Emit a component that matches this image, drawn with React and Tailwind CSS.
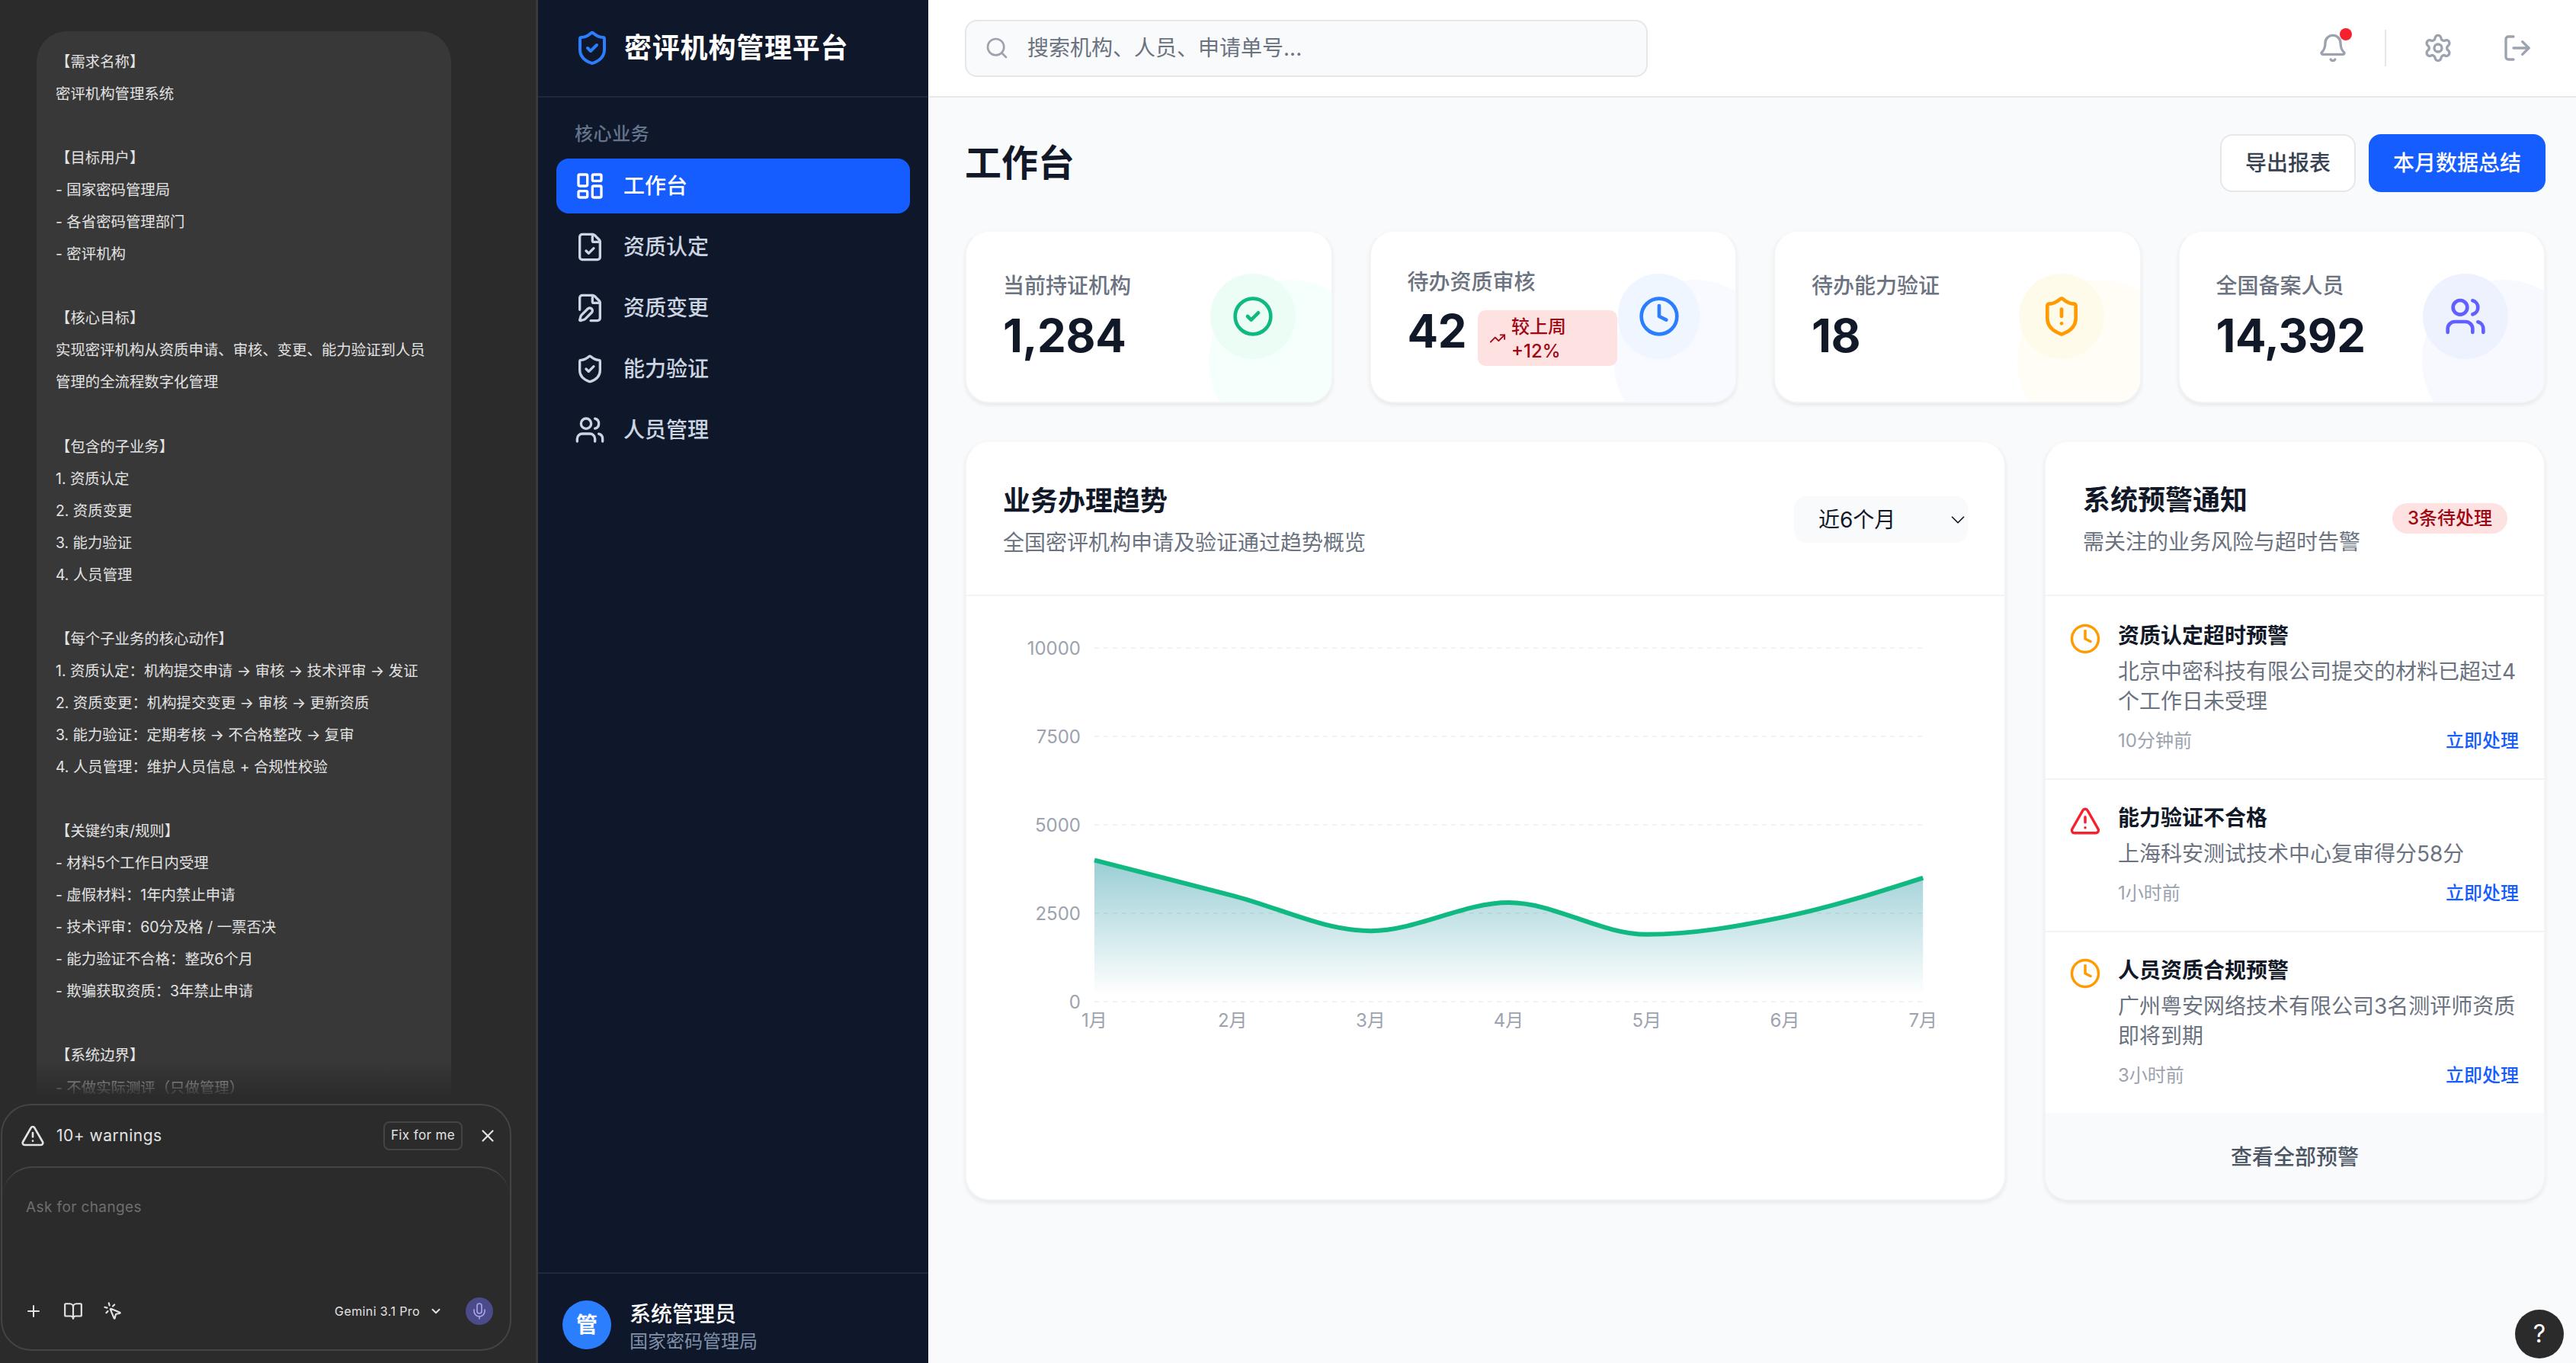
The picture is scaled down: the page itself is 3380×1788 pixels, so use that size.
import React from 'react';
import {
  LayoutDashboard, FileCheck, FilePen, ShieldCheck, Users, Search, Bell, Settings, LogOut,
  CircleCheck, Clock, ShieldAlert, TrendingUp, ChevronDown, TriangleAlert, X, Plus, BookOpen,
  MousePointerClick, Mic,
} from 'lucide-react';

const requirement = `【需求名称】
密评机构管理系统

【目标用户】
- 国家密码管理局
- 各省密码管理部门
- 密评机构

【核心目标】
实现密评机构从资质申请、审核、变更、能力验证到人员
管理的全流程数字化管理

【包含的子业务】
1. 资质认定
2. 资质变更
3. 能力验证
4. 人员管理

【每个子业务的核心动作】
1. 资质认定：机构提交申请 → 审核 → 技术评审 → 发证
2. 资质变更：机构提交变更 → 审核 → 更新资质
3. 能力验证：定期考核 → 不合格整改 → 复审
4. 人员管理：维护人员信息 + 合规性校验

【关键约束/规则】
- 材料5个工作日内受理
- 虚假材料：1年内禁止申请
- 技术评审：60分及格 / 一票否决
- 能力验证不合格：整改6个月
- 欺骗获取资质：3年禁止申请

【系统边界】
- 不做实际测评（只做管理）`;

const navItems = [
  { label: '工作台', icon: LayoutDashboard, active: true },
  { label: '资质认定', icon: FileCheck },
  { label: '资质变更', icon: FilePen },
  { label: '能力验证', icon: ShieldCheck },
  { label: '人员管理', icon: Users },
];

const alerts = [
  { title: '资质认定超时预警', desc: '北京中密科技有限公司提交的材料已超过4个工作日未受理', time: '10分钟前', icon: Clock, color: 'text-[#ff9a00]' },
  { title: '能力验证不合格', desc: '上海科安测试技术中心复审得分58分', time: '1小时前', icon: TriangleAlert, color: 'text-[#f5222d]' },
  { title: '人员资质合规预警', desc: '广州粤安网络技术有限公司3名测评师资质即将到期', time: '3小时前', icon: Clock, color: 'text-[#ff9a00]' },
];

// chart geometry, in page pixels
const chartData = [4000, 3000, 2000, 2800, 1900, 2400, 3500];
const months = ['1月', '2月', '3月', '4月', '5月', '6月', '7月'];
const ticks = [10000, 7500, 5000, 2500, 0];
const plotLeft = 168;
const stepX = 181.2;
const plotTop = 20;
const plotH = 464;
const toY = (v) => plotTop + plotH - (v / 10000) * plotH;

// same curve as d3 curveMonotoneX
function monotonePath(pts) {
  const n = pts.length;
  const s = [];
  for (let i = 0; i < n - 1; i++) s.push((pts[i + 1][1] - pts[i][1]) / (pts[i + 1][0] - pts[i][0]));
  const t = pts.map((_, i) => {
    if (i === 0 || i === n - 1) return null;
    const a = s[i - 1];
    const b = s[i];
    return (Math.sign(a) + Math.sign(b)) * Math.min(Math.abs(a), Math.abs(b), 0.25 * Math.abs(a + b));
  });
  t[0] = (3 * s[0] - t[1]) / 2;
  t[n - 1] = (3 * s[n - 2] - t[n - 2]) / 2;
  let d = `M${pts[0][0]},${pts[0][1]}`;
  for (let i = 0; i < n - 1; i++) {
    const h = (pts[i + 1][0] - pts[i][0]) / 3;
    d += `C${pts[i][0] + h},${pts[i][1] + h * t[i]} ${pts[i + 1][0] - h},${pts[i + 1][1] - h * t[i + 1]} ${pts[i + 1][0]},${pts[i + 1][1]}`;
  }
  return d;
}

const points = chartData.map((v, i) => [plotLeft + i * stepX, toY(v)]);
const linePath = monotonePath(points);
const areaPath = `${linePath}L${points[6][0]},${toY(0)}L${points[0][0]},${toY(0)}Z`;

function TrendChart() {
  return (
    <svg width="1361" height="560" className="block">
      <defs>
        <linearGradient id="trendFill" x1="0" y1="0" x2="0" y2="1">
          <stop offset="5%" stopColor="#0e8a9a" stopOpacity="0.4" />
          <stop offset="95%" stopColor="#0e8a9a" stopOpacity="0" />
        </linearGradient>
      </defs>
      {ticks.map((t) => (
        <g key={t}>
          <line x1={plotLeft} x2={plotLeft + 6 * stepX} y1={toY(t)} y2={toY(t)} stroke="#f1f2f4" strokeWidth="2" strokeDasharray="6 6" />
          <text x={plotLeft - 18} y={toY(t) + 9} textAnchor="end" fontSize="24" fill="#9ca3af">{t}</text>
        </g>
      ))}
      <path d={areaPath} fill="url(#trendFill)" />
      <path d={linePath} fill="none" stroke="#10b981" strokeWidth="6" />
      {months.map((m, i) => (
        <text key={m} x={plotLeft + i * stepX} y={toY(0) + 33} textAnchor="middle" fontSize="24" fill="#9ca3af">{m}</text>
      ))}
    </svg>
  );
}

function StatCard({ label, value, icon: Icon, tint, blob, iconColor, badge }) {
  return (
    <div className="relative h-[227px] overflow-hidden rounded-[32px] border-2 border-[#f3f4f6] border-t-[#f8f8f9] bg-white shadow-[0_3px_5px_rgba(0,0,0,0.07)]">
      <div className={`absolute left-[318px] top-[63px] h-[212px] w-[212px] rounded-full ${blob}`} />
      <div className="relative flex items-start justify-between pl-[48px] pr-[47px]">
        <div className={badge ? 'pt-[46px]' : 'pt-[51px]'}>
          <p className="text-[28px] leading-[40px] font-medium text-[#6b7280]">{label}</p>
          <div className={`flex items-start ${badge ? 'mt-[14px]' : 'mt-[15px]'}`}>
            <p className="text-[60px] leading-[60px] font-bold tracking-[-0.4px] text-[#111827]">{value}</p>
            {badge && (
              <div className="ml-[15px] mt-[3px] flex h-[73px] w-[183px] items-center gap-[7px] rounded-[10px] bg-[#fee2e2] pl-[15px]">
                <TrendingUp size={22} strokeWidth={2} className="text-[#9f0712]" />
                <span className="pt-[3px] text-[24px] leading-[32px] font-medium whitespace-pre text-[#9f0712]">{'较上周\n+12%'}</span>
              </div>
            )}
          </div>
        </div>
        <div className={`mt-[55px] flex h-[112px] shrink-0 items-center justify-center rounded-full ${badge ? 'w-[107px]' : 'w-[112px]'} ${tint}`}>
          <Icon size={56} strokeWidth={2} className={iconColor} />
        </div>
      </div>
    </div>
  );
}

function BuilderPanel() {
  return (
    <div className="flex h-full w-[706px] shrink-0 flex-col border-r-[3px] border-[#3a3a3a] bg-[#2b2b2b] text-[#e3e3e3]">
      <div className="h-[1435px] shrink-0 overflow-hidden pt-[41px] pl-[48px]">
        <div className="relative h-full w-[544px] overflow-hidden rounded-t-[40px] bg-[#383838]">
          <p className="pt-[19px] pl-[25px] text-[19.4px] leading-[42.05px] whitespace-pre-wrap">{requirement}</p>
          <div className="absolute inset-x-0 bottom-0 h-[44px] bg-gradient-to-b from-transparent to-[#2b2b2b]/90" />
        </div>
      </div>
      <div className="mt-[13px] ml-px flex h-[324px] w-[670px] flex-col overflow-hidden rounded-[40px] border-2 border-[#444444]">
        <div className="flex h-[80px] shrink-0 items-center pr-[16px] pl-[24px]">
          <TriangleAlert size={32} strokeWidth={2} />
          <span className="ml-[15px] text-[21px] tracking-[0.5px]">10+ warnings</span>
          <span className="ml-auto flex h-[38px] w-[104px] items-center justify-center rounded-[8px] border-2 border-[#444444] text-[17px] tracking-[0.4px]">Fix for me</span>
          <X size={26} strokeWidth={2} className="ml-[20px]" />
        </div>
        <div className="flex flex-1 flex-col rounded-t-[40px] border-t-2 border-[#444444] pt-[40px] pr-[22px] pb-[32px] pl-[31px]">
          <p className="text-[19px] leading-[24px] tracking-[0.4px] text-[#6e6e6e]">Ask for changes</p>
          <div className="mt-auto flex items-center">
            <Plus size={24} strokeWidth={2} className="-ml-[2px]" />
            <BookOpen size={26} strokeWidth={2} className="ml-[27px]" />
            <MousePointerClick size={26} strokeWidth={2} className="ml-[26px]" />
            <span className="ml-auto text-[16px] tracking-[0.4px]">Gemini 3.1 Pro</span>
            <ChevronDown size={18} strokeWidth={2.5} className="ml-[12px]" />
            <span className="ml-[30px] flex h-[36px] w-[36px] items-center justify-center rounded-full bg-[#4b4b8c]">
              <Mic size={24} strokeWidth={1.6} className="text-[#a9a6ea]" />
            </span>
          </div>
        </div>
      </div>
    </div>
  );
}

function Sidebar() {
  return (
    <aside className="flex h-full w-[512px] shrink-0 flex-col bg-[#0f172a]">
      <div className="flex h-[128px] shrink-0 items-center gap-[18px] border-b-2 border-[#1e293b] pb-px pl-[47px]">
        <ShieldCheck size={48} strokeWidth={2} className="text-[#2b7fff]" />
        <span className="text-[36px] font-bold tracking-[0.8px] text-white">密评机构管理平台</span>
      </div>
      <p className="mt-[32px] pl-[48px] text-[24px] leading-[32px] font-medium tracking-[0.6px] text-[#64748b]">核心业务</p>
      <nav className="mt-[16px] flex flex-col gap-[8px] pr-[24px] pl-[24px]">
        {navItems.map(({ label, icon: Icon, active }) => (
          <div key={label} className={`flex h-[72px] items-center gap-[24px] rounded-[16px] pl-[24px] text-[28px] font-medium ${active ? 'bg-[#165dff] text-white' : 'text-[#cbd5e1]'}`}>
            <Icon size={40} strokeWidth={2} />
            <span>{label}</span>
          </div>
        ))}
      </nav>
      <div className="mt-auto flex h-[119px] shrink-0 items-start gap-[24px] border-t-2 border-[#1e293b] pt-[35px] pl-[32px]">
        <span className="flex h-[64px] w-[64px] items-center justify-center rounded-full bg-[#2b7fff] text-[28px] font-bold text-white">管</span>
        <div>
          <p className="text-[28px] leading-[36px] font-medium text-white">系统管理员</p>
          <p className="text-[24px] leading-[36px] text-[#8090a8]">国家密码管理局</p>
        </div>
      </div>
    </aside>
  );
}

function AlertCard() {
  return (
    <div className="flex h-[997px] w-[658px] shrink-0 flex-col overflow-hidden rounded-[32px] border-2 border-[#f3f4f6] border-t-[#f8f8f9] bg-white shadow-[0_3px_5px_rgba(0,0,0,0.07)]">
      <div className="flex h-[202px] shrink-0 items-start justify-between border-b-2 border-[#f3f4f6] pt-[52px] pr-[48px] pl-[49px]">
        <div>
          <h3 className="text-[36px] leading-[48px] font-bold text-[#111827]">系统预警通知</h3>
          <p className="mt-[11px] text-[28px] leading-[40px] text-[#6b7280]">需关注的业务风险与超时告警</p>
        </div>
        <span className="mt-[28px] flex h-[40px] items-center rounded-full bg-[#fee2e2] px-[20px] text-[24px] font-medium text-[#9f0712]">3条待处理</span>
      </div>
      {alerts.map(({ title, desc, time, icon: Icon, color }, i) => (
        <div key={title} className={`flex gap-[22px] pr-[33px] pb-[33px] pl-[31px] ${i > 0 ? 'border-t-2 border-[#f3f4f6] pt-[30px]' : 'pt-[32px]'}`}>
          <Icon size={42} strokeWidth={2} className={`mt-[3px] shrink-0 ${color}`} />
          <div className="min-w-0 flex-1">
            <p className="text-[28px] leading-[40px] font-semibold text-[#111827]">{title}</p>
            <p className="mt-[8px] text-[28px] leading-[39px] text-[#6b7280]">{desc}</p>
            <div className="mt-[16px] flex items-center justify-between text-[24px] leading-[32px]">
              <span className="text-[#9ca3af]">{time}</span>
              <span className="font-medium text-[#165dff]">立即处理</span>
            </div>
          </div>
        </div>
      ))}
      <div className="flex flex-1 items-center justify-center bg-[#f9fafb] pt-[2px] text-[28px] font-medium text-[#4b5563]">查看全部预警</div>
    </div>
  );
}

export default function App() {
  return (
    <div className="flex h-[1788px] w-[3380px] overflow-hidden font-['Inter','Noto_Sans_CJK_SC',sans-serif]">
      <BuilderPanel />
      <Sidebar />
      <main className="relative flex min-w-0 flex-1 flex-col bg-[#f9fafb]">
        <header className="flex h-[128px] shrink-0 items-center border-b-2 border-[#e5e7eb] bg-white pr-[57px] pl-[48px]">
          <div className="flex h-[75px] w-[896px] items-center rounded-[16px] border-2 border-[#e5e7eb] bg-[#f9fafb] pl-[24px]">
            <Search size={32} strokeWidth={2} className="text-[#9ca3af]" />
            <span className="ml-[24px] text-[28px] text-[#6b7280]">搜索机构、人员、申请单号...</span>
          </div>
          <div className="ml-auto flex items-center">
            <span className="relative mr-[48px]">
              <Bell size={40} strokeWidth={2} className="text-[#9ca3af]" />
              <span className="absolute -top-[6px] -right-[5px] h-[16px] w-[16px] rounded-full bg-[#f5222d]" />
            </span>
            <span className="h-[48px] w-[2px] bg-[#e5e7eb]" />
            <Settings size={40} strokeWidth={2} className="ml-[48px] text-[#9ca3af]" />
            <LogOut size={40} strokeWidth={2} className="ml-[64px] text-[#9ca3af]" />
          </div>
        </header>
        <div className="flex flex-1 flex-col pt-[48px] pr-[40px] pl-[48px]">
          <div className="flex items-center justify-between">
            <h1 className="text-[48px] font-bold text-[#111827]">工作台</h1>
            <div className="flex gap-[17px]">
              <button className="h-[76px] w-[178px] rounded-[16px] border-2 border-[#e5e7eb] bg-white text-[28px] font-medium text-[#374151]">导出报表</button>
              <button className="h-[76px] w-[232px] rounded-[16px] bg-[#165dff] text-[28px] font-medium text-white">本月数据总结</button>
            </div>
          </div>
          <div className="mt-[50px] grid grid-cols-4 gap-[48px]">
            <StatCard label="当前持证机构" value="1,284" icon={CircleCheck} tint="bg-[#ecfdf5]" blob="bg-[#f5fffb]" iconColor="text-[#10b981]" />
            <StatCard label="待办资质审核" value="42" icon={Clock} tint="bg-[#eff6ff]" blob="bg-[#f8faff]" iconColor="text-[#2b7fff]" badge />
            <StatCard label="待办能力验证" value="18" icon={ShieldAlert} tint="bg-[#fffbeb]" blob="bg-[#fffdf6]" iconColor="text-[#ff9a00]" />
            <StatCard label="全国备案人员" value="14,392" icon={Users} tint="bg-[#eef2ff]" blob="bg-[#f8f9ff]" iconColor="text-[#615fff]" />
          </div>
          <div className="mt-[49px] flex gap-[50px]">
            <div className="h-[997px] w-[1366px] shrink-0 overflow-hidden rounded-[32px] border-2 border-[#f3f4f6] border-t-[#f8f8f9] bg-white shadow-[0_3px_5px_rgba(0,0,0,0.07)]">
              <div className="flex h-[202px] items-start justify-between border-b-2 border-[#f3f4f6] pt-[53px] pr-[48px] pl-[48px]">
                <div>
                  <h3 className="text-[36px] leading-[48px] font-bold text-[#111827]">业务办理趋势</h3>
                  <p className="mt-[11px] text-[28px] leading-[40px] text-[#6b7280]">全国密评机构申请及验证通过趋势概览</p>
                </div>
                <div className="mt-[18px] flex h-[61px] w-[228px] items-center justify-between rounded-[16px] bg-[#f9fafb] pl-[32px] text-[28px] text-[#111827]">
                  <span>近6个月</span>
                  <ChevronDown size={30} strokeWidth={1.4} className="-mr-[2px]" />
                </div>
              </div>
              <div className="pt-[48px]">
                <TrendChart />
              </div>
            </div>
            <AlertCard />
          </div>
        </div>
        <span className="absolute right-[16px] bottom-[6px] flex h-[64px] w-[64px] items-center justify-center rounded-full bg-[#2b2b2b] text-[32px] text-white">?</span>
      </main>
    </div>
  );
}
